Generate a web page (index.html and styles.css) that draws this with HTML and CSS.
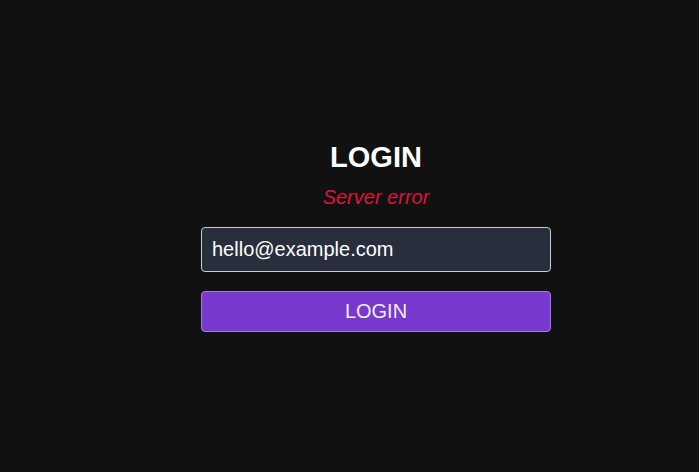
FILE: index.html
```html
<!DOCTYPE html>
<html lang="en">

<head>
     <meta charset="UTF-8">
     <meta name="viewport" content="width=device-width, initial-scale=1.0">
     <title>Login</title>
     <link rel="stylesheet" href="styles.css">
</head>

<body>

     <div id="container">
          <form class="login_form">
               <h1 class="login_title">LOGIN</h1>
               <p class="login_error">Server error</p>
               <input class="login_input" type="email" value="hello@example.com">
               <button class="login_btn" type="button">LOGIN</button>
          </form>
     </div>

</body>

</html>
```

FILE: styles.css
```css
html,
body {
     margin: 0;
     height: 100%;
     background-color: #111;
     font-family: "Liberation Sans", Arial, sans-serif;
}

#container {
     display: flex;
     justify-content: center;
     padding-top: 141px;
     padding-left: 53px;
}

.login_form {
     width: 350px;
     display: flex;
     flex-direction: column;
     align-items: center;
}

.login_title {
     margin: 0;
     color: #fff;
     font-size: 29px;
     font-weight: bold;
}

.login_error {
     margin: 12px 0 0;
     color: #dc143c;
     font-size: 20px;
     font-style: italic;
}

.login_input {
     box-sizing: border-box;
     width: 100%;
     height: 45px;
     margin-top: 18px;
     padding: 0 10px;
     border: 1px solid #ccc;
     border-radius: 4px;
     background-color: #282e3b;
     color: #fff;
     font-family: inherit;
     font-size: 20px;
     outline: none;
}

.login_btn {
     box-sizing: border-box;
     width: 100%;
     height: 41px;
     margin-top: 19px;
     border: 1px solid #a57ae0;
     border-radius: 4px;
     background-color: #7837cd;
     color: #eee;
     font-family: inherit;
     font-size: 20px;
}
```
